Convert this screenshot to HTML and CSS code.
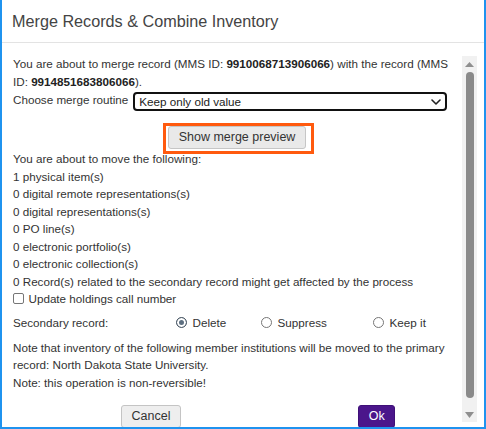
FILE: index.html
```html
<!DOCTYPE html>
<html>
<head>
<meta charset="utf-8">
<title>Merge Records &amp; Combine Inventory</title>
<link rel="stylesheet" href="styles.css">
</head>
<body>
<div class="dialog">
  <div class="header">
    <h1 class="title">Merge Records &amp; Combine Inventory</h1>
  </div>
  <div class="body">
    <div class="content">
      <p class="intro">You are about to merge record (MMS ID: <b>9910068713906066</b>) with the record (MMS ID: <b>9914851683806066</b>).</p>
      <div class="routine">
        <label class="routine-label" for="routine">Choose merge routine</label>
        <span class="select-wrap">
          <select id="routine" class="select"><option>Keep only old value</option><option>Keep only new value</option></select>
          <svg class="chevron" width="10" height="6" viewBox="0 0 10 6"><path d="M1 1 L5 5 L9 1" fill="none" stroke="#222" stroke-width="1.6" stroke-linecap="round" stroke-linejoin="round"/></svg>
        </span>
      </div>
      <div class="preview-row">
        <button class="btn preview" type="button">Show merge preview<span class="highlight"></span></button>
      </div>
      <ul class="moves">
        <li>You are about to move the following:</li>
        <li>1 physical item(s)</li>
        <li>0 digital remote representations(s)</li>
        <li>0 digital representations(s)</li>
        <li>0 PO line(s)</li>
        <li>0 electronic portfolio(s)</li>
        <li>0 electronic collection(s)</li>
        <li>0 Record(s) related to the secondary record might get affected by the process</li>
      </ul>
      <label class="check"><input class="checkbox" type="checkbox">Update holdings call number</label>
      <div class="secondary">
        <span class="sec-label">Secondary record:</span>
        <label class="radio-opt"><input class="radio" type="radio" name="sec" checked>Delete</label>
        <label class="radio-opt"><input class="radio" type="radio" name="sec">Suppress</label>
        <label class="radio-opt"><input class="radio" type="radio" name="sec">Keep it</label>
      </div>
      <p class="note">Note that inventory of the following member institutions will be moved to the primary record: North Dakota State University.<br>Note: this operation is non-reversible!</p>
      <div class="actions">
        <button class="btn cancel" type="button">Cancel</button>
        <button class="btn ok" type="button">Ok</button>
      </div>
    </div>
    <div class="scrollbar">
      <div class="sb-up"><svg width="9" height="5" viewBox="0 0 9 5"><path d="M4.5 0 L9 5 L0 5 Z" fill="#8f8f8f"/></svg></div>
      <div class="thumb"></div>
      <div class="sb-space"></div>
      <div class="sb-down"><svg width="9" height="6" viewBox="0 0 9 6"><path d="M0 0 L9 0 L4.5 6 Z" fill="#8f8f8f"/></svg></div>
    </div>
  </div>
</div>
</body>
</html>
```
FILE: styles.css
```css
html, body {
  margin: 0;
  padding: 0;
  background: #ffffff;
}

body {
  width: 486px;
  height: 429px;
  overflow: hidden;
  font-family: "Liberation Sans", Arial, sans-serif;
  color: #333333;
}

.dialog {
  box-sizing: border-box;
  width: 486px;
  height: 429px;
  border: 2px solid #1f93ef;
  border-top: none;
  display: flex;
  flex-direction: column;
  background: #ffffff;
}

.header {
  height: 42px;
  border-bottom: 1px solid #e3e3e3;
  padding-left: 10px;
  flex: none;
}

.title {
  margin: 0;
  font-size: 16.2px;
  font-weight: normal;
  line-height: 42px;
  color: #444444;
}

.body {
  flex: 1;
  display: flex;
  min-height: 0;
}

.content {
  flex: 1;
  min-width: 0;
  overflow: hidden;
  padding: 12px 1px 0 11px;
  font-size: 11.67px;
  line-height: 17.5px;
}

.intro {
  margin: 0;
}

.intro b {
  color: #222222;
}

.routine {
  display: flex;
  align-items: flex-start;
  gap: 5px;
  margin-top: 1px;
}

.routine-label {
  white-space: nowrap;
}

.select-wrap {
  position: relative;
  display: block;
  margin-top: 1.3px;
}

.select {
  appearance: none;
  -webkit-appearance: none;
  box-sizing: border-box;
  width: 314px;
  height: 18.5px;
  margin: 0;
  padding: 0 20px 0 4px;
  border: 2px solid #111111;
  border-radius: 4px;
  background: #ffffff;
  font-family: "Liberation Sans", Arial, sans-serif;
  font-size: 11.67px;
  line-height: 14px;
  color: #222222;
  display: block;
}

.chevron {
  position: absolute;
  right: 6px;
  top: 6.5px;
  pointer-events: none;
}

.preview-row {
  display: flex;
  justify-content: center;
  margin-top: 15.7px;
  margin-bottom: 1.2px;
}

.btn {
  font-family: "Liberation Sans", Arial, sans-serif;
  font-size: 12.5px;
  line-height: 15px;
  cursor: pointer;
  margin: 0;
}

.preview {
  position: relative;
  box-sizing: border-box;
  width: 138px;
  height: 22.6px;
  padding: 0;
  background: #e9e9e9;
  border: 1px solid #c6c6c6;
  border-radius: 3px;
  color: #333333;
}

.highlight {
  position: absolute;
  top: -4.5px;
  left: -6.5px;
  right: -8.5px;
  bottom: -6px;
  border: 3px solid #ff5a0e;
  pointer-events: none;
}

.moves {
  list-style: none;
  margin: 0;
  padding: 0;
}

.check {
  display: flex;
  align-items: center;
  white-space: nowrap;
}

.checkbox {
  appearance: none;
  -webkit-appearance: none;
  box-sizing: border-box;
  width: 10.5px;
  height: 10.5px;
  margin: -1px 5px 0 0;
  border: 1px solid #767676;
  border-radius: 2px;
  background: #ffffff;
}

.secondary {
  display: grid;
  grid-template-columns: 163px 85px 112px auto;
  align-items: center;
  margin-top: 6px;
  margin-bottom: 7.5px;
}

.radio-opt {
  display: flex;
  align-items: center;
  white-space: nowrap;
}

.radio {
  appearance: none;
  -webkit-appearance: none;
  box-sizing: border-box;
  width: 11px;
  height: 11px;
  margin: -1px 5.6px 0 0;
  border: 1px solid #767676;
  border-radius: 50%;
  background: #ffffff;
}

.radio:checked {
  border-color: #4c5966;
  background: #5d6f80;
  box-shadow: inset 0 0 0 2px #ffffff;
}

.note {
  margin: 0;
}

.actions {
  display: flex;
  align-items: flex-start;
  margin-top: 13.5px;
}

.cancel {
  box-sizing: border-box;
  width: 59.5px;
  height: 23px;
  margin-left: 108.3px;
  padding: 0;
  background: #eeeeee;
  border: 1px solid #c4c4c4;
  border-radius: 3px;
  color: #333333;
}

.ok {
  box-sizing: border-box;
  width: 37px;
  height: 23px;
  margin-left: 177.5px;
  padding: 0;
  background: #4b168b;
  border: 1px solid #3f1078;
  border-radius: 3px;
  color: #ffffff;
}

.scrollbar {
  flex: none;
  width: 15px;
  margin: 13px 7px 5px 0;
  background: #f1f1f1;
  display: flex;
  flex-direction: column;
}

.sb-up {
  height: 16px;
  display: flex;
  justify-content: center;
  align-items: flex-start;
}

.sb-up svg {
  margin-top: 6px;
}

.thumb {
  width: 8px;
  height: 326px;
  margin: 0 auto;
  border-radius: 4px;
  background: #8a8a8a;
}

.sb-space {
  flex: 1;
}

.sb-down {
  height: 14px;
  display: flex;
  justify-content: center;
  align-items: flex-start;
}

.sb-down svg {
  margin-top: 4px;
}
```
